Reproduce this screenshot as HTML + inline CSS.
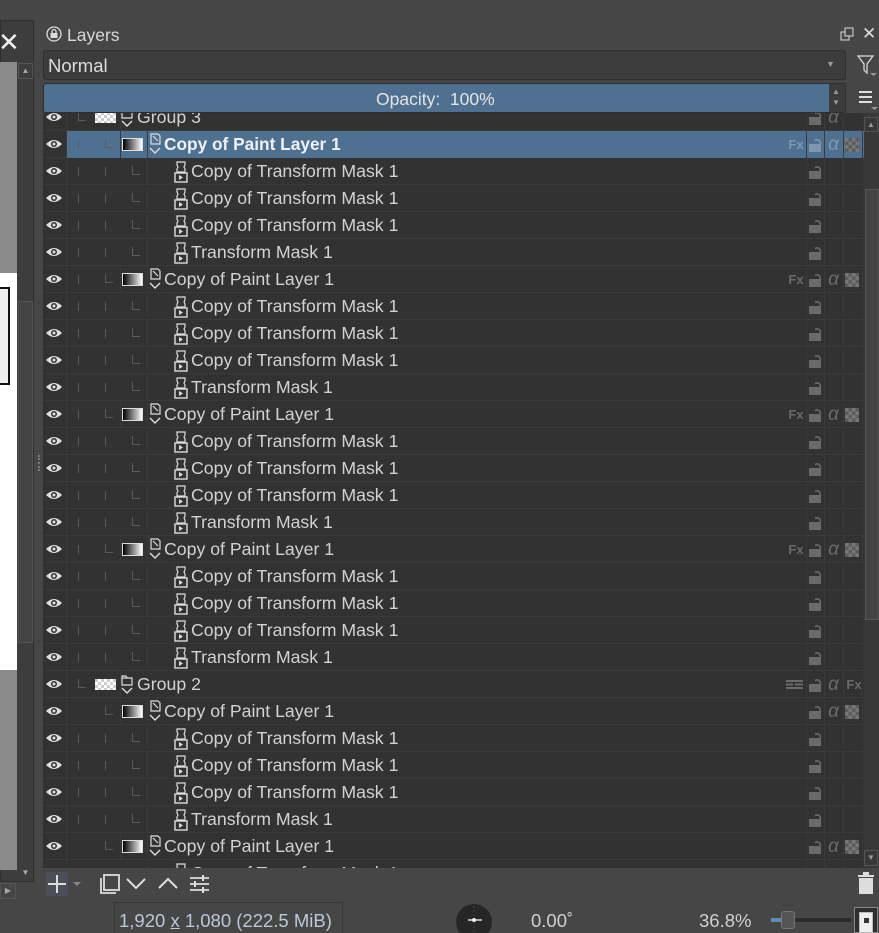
<!DOCTYPE html>
<html><head><meta charset="utf-8">
<style>
*{margin:0;padding:0;box-sizing:border-box}
html,body{width:879px;height:933px;overflow:hidden}
body{background:#464646;font-family:"Liberation Sans",sans-serif;color:#d2d2d2;position:relative}
.a{position:absolute}
#list{position:absolute;left:43px;top:113px;width:821px;height:755px;overflow:hidden;background:#323232}
.row{position:absolute;left:0;width:821px;height:27px;border-bottom:1px solid #3a3a3a;font-size:17.7px}
.row.sel .hl{position:absolute;left:23px;top:0;width:798px;height:27px;background:#4f7191}
.vl{position:absolute;top:0;height:27px;width:1px;background:#3a3a3a}
.tk{position:absolute;top:9px;width:1px;height:9px;background:#5a5a5a}
.L{position:absolute;top:8px;width:8px;height:9px;border-left:1px solid #5a5a5a;border-bottom:1px solid #5a5a5a}
.txt{position:absolute;top:3px;white-space:nowrap}
.thumb{position:absolute;top:7px;width:21px;height:13px;background:linear-gradient(90deg,#000,#fff);border:1px solid #ddd}
.gthumb{position:absolute;top:8px;width:21px;height:11px;background:repeating-conic-gradient(#fff 0 25%,#ccc 0 50%) 0 0/6px 6px}
.ri{position:absolute;top:0;height:27px;font-size:14px;color:#6a6a6a;text-align:center;line-height:27px}
.sel .ri{color:#7d98b0}
.lock{position:absolute;top:6px;width:14px;height:15px}
.chk{position:absolute;top:7px;width:14px;height:14px;background:repeating-conic-gradient(#5c5c5c 0 25%,#777 0 50%) 0 0/7px 7px}
</style></head><body>
<div class="a" style="left:0;top:20px;width:34px;height:862px;background:#3d3d3d;border:1px solid #2f2f2f"></div>
<div class="a" style="left:0;top:62px;width:17px;height:211px;background:#8a8a8a"></div>
<div class="a" style="left:0;top:273px;width:17px;height:397px;background:#fff"></div>
<div class="a" style="left:0;top:287px;width:10px;height:98px;border:2px solid #111;border-left:none;background:#eee"></div>
<div class="a" style="left:0;top:670px;width:17px;height:200px;background:#8a8a8a"></div>
<div class="a" style="left:18px;top:63px;width:15px;height:16px;border:1px solid #555;color:#aaa;font-size:8px;text-align:center;line-height:14px">▲</div>
<div class="a" style="left:18px;top:301px;width:15px;height:342px;background:#444;border:1px solid #555"></div>
<div class="a" style="left:18px;top:868px;width:15px;height:14px;color:#aaa;font-size:8px;text-align:center">▼</div>
<div class="a" style="left:0;top:883px;width:16px;height:16px;border:1px solid #555;color:#aaa;font-size:8px;line-height:14px;text-align:center">▶</div>
<div class="a" style="left:-2px;top:29px;font-size:26px;color:#eee;line-height:26px">✕</div>
<div class="a" style="left:38px;top:455px;width:2px;height:16px;border-left:2px dotted #777"></div>

<svg class="a" style="left:46px;top:26px" width="16" height="16"><circle cx="8" cy="8" r="7" fill="none" stroke="#ddd" stroke-width="1.3"/><rect x="4.5" y="7" width="7" height="5" fill="#ddd"/><path d="M6 7V5.5a2 2 0 014 0V7" fill="none" stroke="#ddd" stroke-width="1.3"/></svg>
<div class="a" style="left:67px;top:25px;font-size:17.5px;color:#d8d8d8">Layers</div>
<svg class="a" style="left:840px;top:27px" width="14" height="14"><rect x="1" y="5" width="8" height="8" fill="none" stroke="#ddd"/><rect x="5" y="1" width="8" height="8" fill="#464646" stroke="#ddd"/></svg>
<div class="a" style="left:862px;top:24px;font-size:17px;color:#ddd">✕</div>
<div class="a" style="left:43px;top:50px;width:803px;height:30px;background:#3c3c3c;border:1px solid #2e2e2e;border-radius:3px"></div>
<div class="a" style="left:48px;top:55px;font-size:18.5px;color:#dcdcdc">Normal</div>
<div class="a" style="left:826px;top:59px;font-size:9px;color:#999">▼</div>
<svg class="a" style="left:856px;top:53px" width="22" height="26"><path d="M2 3h15l-6 8v9l-3-3v-6z" fill="none" stroke="#ddd" stroke-width="1.2"/><path d="M14 20h7l-3.5 3z" fill="#999"/></svg>
<div class="a" style="left:43px;top:83px;width:803px;height:30px;background:#4f7191;border:1px solid #2e2e2e;border-radius:3px"></div>
<div class="a" style="left:829px;top:84px;width:16px;height:28px;background:#3c3c3c"></div>
<div class="a" style="left:832px;top:86px;font-size:8px;color:#999;line-height:11px">▲<br>▼</div>
<div class="a" style="left:376px;top:89px;font-size:17.5px;color:#e4e4e4">Opacity:&nbsp; 100%</div>
<svg class="a" style="left:858px;top:88px" width="21" height="26"><path d="M1 4h13M1 9h13M1 14h13" stroke="#ddd" stroke-width="2"/><path d="M13 19h7l-3.5 3z" fill="#999"/></svg>

<div id="list"></div>
<div class="a" style="left:864px;top:113px;width:15px;height:755px;background:#383838"></div>
<div class="a" style="left:864px;top:117px;width:14px;height:15px;border:1px solid #555;color:#999;font-size:8px;text-align:center;line-height:13px">▲</div>
<div class="a" style="left:865px;top:189px;width:14px;height:431px;background:#444;border:1px solid #555"></div>
<div class="a" style="left:864px;top:850px;width:14px;height:16px;border:1px solid #555;color:#999;font-size:8px;text-align:center;line-height:14px">▼</div>

<div class="a" style="left:46px;top:872px;width:22px;height:24px;background:#4b5058"></div>
<svg class="a" style="left:46px;top:872px" width="200" height="24"><path d="M11 3v18M2 12h18" stroke="#ddd" stroke-width="2"/><path d="M27 10h8l-4 4z" fill="#888"/><rect x="58" y="3" width="15" height="15" fill="none" stroke="#ddd" stroke-width="1.8"/><path d="M55 6v15h15" fill="none" stroke="#ddd" stroke-width="1.8"/><path d="M81 7l9 9 9-9M113 16l9-9 9 9" fill="none" stroke="#ddd" stroke-width="2"/><path d="M144 6h19M144 12h19M144 18h19" stroke="#ddd" stroke-width="1.8"/><path d="M157 3v6M149 9v6M157 15v6" stroke="#ddd" stroke-width="2"/></svg>
<svg class="a" style="left:857px;top:872px" width="18" height="24"><rect x="2" y="6" width="14" height="16" fill="#ddd"/><rect x="1" y="3" width="16" height="2" fill="#ddd"/><rect x="6" y="0" width="6" height="3" fill="#ddd"/></svg>

<div class="a" style="left:114px;top:902px;width:229px;height:31px;border:1px solid #383838;border-bottom:none"></div>
<div class="a" style="left:119px;top:910px;font-size:18.5px;color:#bcc8d8">1,920 <u>x</u> 1,080 (222.5 MiB)</div>
<div class="a" style="left:456px;top:904px;width:36px;height:36px;border-radius:50%;background:#262626"></div>
<svg class="a" style="left:456px;top:904px" width="36" height="29"><path d="M18 2v28" stroke="#444" stroke-dasharray="2 2"/><path d="M12 16h14" stroke="#ddd" stroke-width="1.5"/><circle cx="18" cy="16" r="2" fill="#eee"/></svg>
<div class="a" style="left:531px;top:910px;font-size:18.5px;color:#cfcfcf">0.00˚</div>
<div class="a" style="left:699px;top:910px;font-size:18.5px;color:#cfcfcf">36.8%</div>
<div class="a" style="left:771px;top:918px;width:80px;height:4px;background:#2a2a2a"></div>
<div class="a" style="left:771px;top:918px;width:12px;height:4px;background:#5d8bbd"></div>
<div class="a" style="left:781px;top:911px;width:14px;height:18px;border-radius:3px;background:#555;border:1px solid #777"></div>
<div class="a" style="left:854px;top:907px;width:24px;height:26px;border:1px solid #888;background:#2e2e2e"></div>
<div class="a" style="left:859px;top:912px;width:14px;height:21px;border:1px solid #bbb;background:#eee"></div>
<div class="a" style="left:864px;top:918px;width:5px;height:5px;background:#333"></div>

<script>
var rows=[["G","Group 3",0]];
function grp(){rows.push(["P","Copy of Paint Layer 1",1]);for(var i=0;i<3;i++)rows.push(["M","Copy of Transform Mask 1"]);rows.push(["M","Transform Mask 1"]);}
for(var k=0;k<4;k++)grp();
rows[1].push("sel");
rows.push(["G","Group 2",1]);
rows.push(["P","Copy of Paint Layer 1",2]);for(var i=0;i<3;i++)rows.push(["M","Copy of Transform Mask 1"]);rows.push(["M","Transform Mask 1"]);
rows.push(["P","Copy of Paint Layer 1",2]);rows.push(["M","Copy of Transform Mask 1"]);
var eye='<svg style="position:absolute;left:2px;top:6px" width="18" height="14"><path d="M1 7Q9 -1 17 7Q9 15 1 7z" fill="#ddd"/><circle cx="9" cy="7" r="3" fill="#323232"/><circle cx="9" cy="7" r="1.5" fill="#ddd"/></svg>';
var mask='<svg style="position:absolute;top:2px" width="14" height="23"><path d="M3 2h8v3l-1 2 1 2v3H3V9l1-2-1-2z" fill="none" stroke="#ddd" stroke-width="1.2"/><rect x="1" y="13" width="12" height="9" fill="none" stroke="#ddd" stroke-width="1.4"/><path d="M5 15v5l4-2.5z" fill="#ddd"/></svg>';
var pic='<svg style="position:absolute;top:1px" width="14" height="25"><path d="M3 2h7l2 2v8H3z M5 4l5 5" fill="none" stroke="#ddd" stroke-width="1.2"/><path d="M2 16l5 5 5-5" fill="none" stroke="#ddd" stroke-width="1.4"/></svg>';
var fold='<svg style="position:absolute;top:1px" width="14" height="25"><path d="M2 4h4l1 2h5v7H2z M2 6h10" fill="none" stroke="#ddd" stroke-width="1.2"/><path d="M2 16l5 5 5-5" fill="none" stroke="#ddd" stroke-width="1.4"/></svg>';
function lock(sel){var c=sel?'#7d98b0':'#6a6a6a';return '<svg class="lock" style="left:765px" width="14" height="15"><path d="M1 7h12v8H1z" fill="'+c+'"/><path d="M7 3.5q5-2 5.5 3.5" fill="none" stroke="'+c+'" stroke-width="1.6"/></svg>';}
var alpha='<div class="ri" style="left:781px;width:19px;font-style:italic;font-size:19px">α</div>';
var chk='<div class="chk" style="left:802px"></div>';
var fx=function(x){return '<div class="ri" style="left:'+x+'px;width:20px;font-weight:bold;font-size:13px">Fx</div>'};
var h='';
rows.forEach(function(r,i){
  var top=-9+27*i;var sel=r[3]=="sel";
  var s='<div class="row'+(sel?' sel':'')+'" style="top:'+top+'px">'+(sel?'<div class="hl"></div>':'');
  s+='<div class="vl" style="left:23px"></div><div class="vl" style="left:763px"></div><div class="vl" style="left:781px"></div><div class="vl" style="left:800px"></div><div class="vl" style="left:819px"></div>';
  s+=eye;
  var t=r[0];
  if(t=="G"){
    var d=r[2];
    s+='<div class="L" style="left:35px"></div>';
    s+='<div class="vl" style="left:77px"></div><div class="gthumb" style="left:52px"></div><div style="position:absolute;left:77px">'+fold+'</div>';
    s+='<div class="txt" style="left:94px">'+r[1]+'</div>';
    if(d==1){s+='<svg style="position:absolute;left:743px;top:9px" width="18" height="9"><path d="M0 0h17v2H0zM0 3.5h7v2H0zM9 3.5h8v2H9zM0 7h17v2H0z" fill="#6a6a6a"/></svg>'+lock()+alpha+fx(801);}
    else{s+=lock()+alpha;}
  }else if(t=="P"){
    var d=r[2];
    if(d==1){s+='<div class="tk" style="left:35px"></div><div class="L" style="left:62px"></div>';}
    else{s+='<div class="L" style="left:62px"></div>';}
    s+='<div class="vl" style="left:77px"></div><div class="vl" style="left:104px"></div><div class="thumb" style="left:79px"></div><div style="position:absolute;left:105px">'+pic+'</div>';
    s+='<div class="txt" style="left:121px;'+(sel?'font-weight:bold;color:#eef2f6;font-size:17.3px':'')+'">'+r[1]+'</div>';
    if(d==1){s+=fx(743)+lock(sel)+alpha+chk;}else{s+=lock()+alpha+chk;}
  }else{
    s+='<div class="tk" style="left:35px"></div><div class="tk" style="left:62px"></div><div class="L" style="left:89px"></div>';
    s+='<div class="vl" style="left:104px"></div><div class="vl" style="left:131px"></div><div style="position:absolute;left:131px">'+mask+'</div>';
    s+='<div class="txt" style="left:148px">'+r[1]+'</div>'+lock();
  }
  s+='</div>';h+=s;
});
document.getElementById('list').innerHTML=h;
</script>
</body></html>
